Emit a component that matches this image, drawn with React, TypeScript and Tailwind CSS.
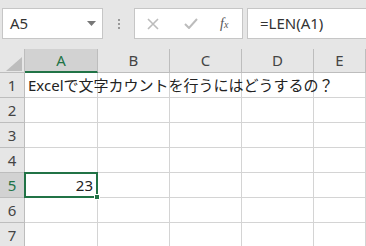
const COLS = ['A', 'B', 'C', 'D', 'E']
const ROWS = [1, 2, 3, 4, 5, 6, 7]

export default function App() {
  return (
    <div className="w-[366px] h-[246px] overflow-hidden bg-[#e6e6e6] font-['Noto_Sans','Noto_Sans_CJK_JP',sans-serif] text-[#444]">
      {/* formula bar */}
      <div className="flex items-stretch h-[49px] pt-2 pb-[10px] pl-[2px]">
        <div className="w-[101px] bg-white border border-[#c6c6c6] flex items-center justify-between pl-[7px] pr-[6px]">
          <span className="text-[15px] text-[#333]">A5</span>
          <svg width="9" height="5" viewBox="0 0 9 5"><path d="M0 0h9L4.5 5z" fill="#777" /></svg>
        </div>
        <div className="w-[31px] flex items-center justify-center">
          <div className="flex flex-col gap-[2px]">
            <span className="w-[2px] h-[2px] bg-[#999]" />
            <span className="w-[2px] h-[2px] bg-[#999]" />
            <span className="w-[2px] h-[2px] bg-[#999]" />
          </div>
        </div>
        <div className="w-[109px] bg-white border border-[#c6c6c6] flex items-center">
          <svg className="ml-[12px]" width="12" height="12" viewBox="0 0 12 12">
            <path d="M1 1L11 11M11 1L1 11" stroke="#bcbcbc" strokeWidth="1.6" />
          </svg>
          <svg className="ml-[25px]" width="14" height="11" viewBox="0 0 14 11">
            <path d="M1 6l4 4L13 1" stroke="#bcbcbc" strokeWidth="2" fill="none" />
          </svg>
          <span className="ml-[22px] font-['Liberation_Serif',serif] italic text-[14px] text-[#555] leading-none">
            f<span className="text-[10px]">x</span>
          </span>
        </div>
        <div className="ml-[4px] flex-1 bg-white border border-[#c6c6c6] border-r-0 flex items-center pl-[12px]">
          <span className="text-[15px] text-[#333]">=LEN(A1)</span>
        </div>
      </div>

      {/* sheet */}
      <div className="grid grid-cols-[25px_73px_72px_72px_72px_1fr] grid-rows-[24px_repeat(7,25px)]">
        <div className="relative border-r border-b border-[#bdbdbd]">
          <svg className="absolute left-[6px] top-[8px]" width="16" height="14" viewBox="0 0 16 14">
            <path d="M16 0V14H0z" fill="#bdbdbd" />
          </svg>
        </div>
        {COLS.map(c => (
          <div key={c}
            className={c === 'A'
              ? 'flex items-center justify-center text-[15px] bg-[#d2d2d2] text-[#217346] border-r border-[#bdbdbd] border-b-2 border-b-[#217346]'
              : 'flex items-center justify-center text-[15px] text-[#444] border-r border-b border-[#bdbdbd]'}>
            {c}
          </div>
        ))}
        {ROWS.map(r => (
          <Row key={r} r={r} />
        ))}
      </div>
    </div>
  )
}

function Row({ r }: { r: number }) {
  const sel = r === 5
  return (
    <>
      <div className={sel
        ? 'flex items-center justify-center text-[15px] bg-[#d2d2d2] text-[#217346] border-r border-b border-[#bdbdbd]'
        : 'flex items-center justify-center text-[15px] text-[#444] border-r border-b border-[#bdbdbd]'}>
        {r}
      </div>
      {COLS.map(c => (
        <div key={c} className="relative bg-white border-r border-b border-[#d4d4d4]">
          {r === 1 && c === 'A' && (
            <span className="absolute z-10 left-[3px] top-[1px] whitespace-nowrap text-[15px] text-[#222]">
              Excelで文字カウントを行うにはどうするの？
            </span>
          )}
          {sel && c === 'A' && (
            <div className="absolute z-10 -left-px -top-px w-[74px] h-[26px] border-2 border-[#217346] flex items-center justify-end pr-[3px]">
              <span className="text-[15px] text-[#222]">23</span>
              <div className="absolute right-[-4px] bottom-[-4px] w-[6px] h-[6px] bg-[#217346] border border-white" />
            </div>
          )}
        </div>
      ))}
    </>
  )
}
